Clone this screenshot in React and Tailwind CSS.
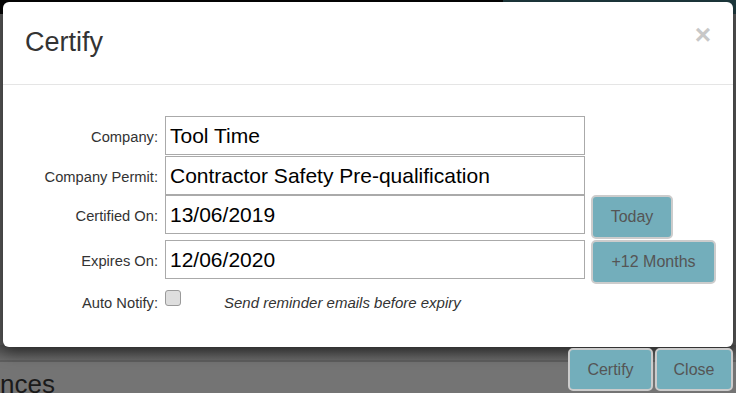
import React from "react";

const font = { fontFamily: '"Liberation Sans", Arial, sans-serif' };

function Row({ label, value, button, buttonW, className = "" }) {
  return (
    <div className={"flex items-start " + className}>
      <div className="w-[155px] h-[39px] pt-[4px] flex items-center justify-end text-[14.7px] text-[#333]">
        {label}
      </div>
      <div className="ml-[7px] w-[420px] h-[39px] border border-[#aaa] flex items-center pl-[4px] text-[21px] text-black">
        {value}
      </div>
      {button && (
        <button
          className={
            "ml-[6px] h-[44px] rounded-[5px] border-2 border-[#ccc] bg-[#73aebb] text-[16px] text-[#555] " +
            buttonW
          }
        >
          {button}
        </button>
      )}
    </div>
  );
}

export default function App() {
  return (
    <div className="relative w-[736px] h-[393px] overflow-hidden bg-[#6f6f6f]" style={font}>
      {/* dimmed page behind the dialog */}
      <div className="flex flex-col h-full">
        <div className="flex h-[14px]">
          <div className="w-[503px] bg-[#050505]" />
          <div className="flex-1 bg-[#1e3a3f]" />
        </div>
        <div className="flex-1 bg-[#5a5a5a]" />
        <div className="h-[15px] bg-gradient-to-b from-[#4e4e4e] to-[#6a6a6a]" />
        <div className="h-[2px] bg-[#5e5e5e]" />
        <div className="h-[31px] bg-[#747474] overflow-hidden">
          <div className="mt-[9px] text-[26px] leading-none text-[#1a1a1a]">nces</div>
        </div>
      </div>

      {/* dialog */}
      <div className="absolute left-[3px] top-[2px] w-[730px] h-[345px] bg-white rounded-[6px] shadow-[0_5px_15px_rgba(0,0,0,0.5)]">
        <div className="h-[83px] border-b border-[#e5e5e5] flex justify-between pl-[22px] pr-[22px] pt-[27px]">
          <h4 className="text-[27px] leading-[27px] text-[#333]">Certify</h4>
          <span className="text-[28px] font-bold leading-none text-[#c8c8c8] mt-[-8px]">×</span>
        </div>
        <div className="pt-[31px]">
          <Row label="Company:" value="Tool Time" className="mb-[1px]" />
          <Row label="Company Permit:" value="Contractor Safety Pre-qualification" />
          <Row label="Certified On:" value="13/06/2019" button="Today" buttonW="w-[82px]" className="mb-[1px]" />
          <Row label="Expires On:" value="12/06/2020" button="+12 Months" buttonW="w-[125px]" />
          <div className="flex items-start mt-[6px]">
            <div className="w-[155px] pt-[5px] text-right text-[14.7px] leading-[16px] text-[#333]">Auto Notify:</div>
            <div className="ml-[7px] w-[16px] h-[16px] rounded-[3px] border border-[#9a9a9a] bg-[#dedede]" />
            <div className="ml-[43px] pt-[5px] text-[15px] leading-[16px] italic text-[#333]">
              Send reminder emails before expiry
            </div>
          </div>
        </div>
      </div>

      {/* footer buttons spilling below the dialog */}
      <div className="absolute left-[568px] top-[348px] flex gap-[2px]">
        <button className="w-[85px] h-[43px] rounded-[5px] border-2 border-[#ccc] bg-[#73aebb] text-[16px] text-[#555]">
          Certify
        </button>
        <button className="w-[78px] h-[43px] rounded-[5px] border-2 border-[#ccc] bg-[#73aebb] text-[16px] text-[#555]">
          Close
        </button>
      </div>
    </div>
  );
}
